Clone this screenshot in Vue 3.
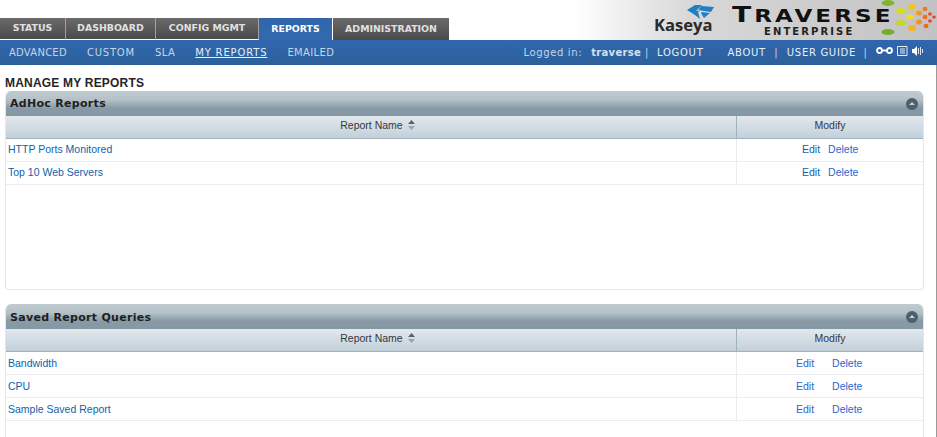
<script setup>
const tabs = [
  { label: 'STATUS', w: 66 },
  { label: 'DASHBOARD', w: 90 },
  { label: 'CONFIG MGMT', w: 103 },
  { label: 'REPORTS', w: 74, active: true },
  { label: 'ADMINISTRATION', w: 116 }
]
const subs = [
  { label: 'ADVANCED', ls: 0.25 },
  { label: 'CUSTOM', ls: 0.8 },
  { label: 'SLA', ls: 0.4 },
  { label: 'MY REPORTS', ls: 0.85, current: true },
  { label: 'EMAILED', ls: 0.35 }
]
const panels = [
  { title: 'AdHoc Reports', rows: ['HTTP Ports Monitored', 'Top 10 Web Servers'], wide: false, filler: 'tall' },
  { title: 'Saved Report Queries', rows: ['Bandwidth', 'CPU', 'Sample Saved Report'], wide: true, filler: 'open' }
]
const dots = [
  [35,3,6.5,3,'#7fb52e'],[35,32,6.5,3,'#76ad2c'],[48,11,5,3,'#d4dc20'],[48,23,5,3,'#c4d824'],
  [59,7,4,3,'#f4c420'],[57,17,4,2.5,'#f0dc20'],[59,28,4,3,'#f4b420'],
  [66,13,3,2.5,'#f49a20'],[66,22,3,2.5,'#f49020'],
  [72,9,2.5,2.2,'#f07828'],[72,17,2.5,2.2,'#f07020'],[73,26,2.5,2.2,'#f06820'],
  [77,14,2,1.8,'#ec5028'],[77,21,2,1.8,'#ec5024'],[81,17,1.7,1.6,'#e83428']
]
</script>

<template>
  <div class="page">
    <header class="top">
      <nav class="tabs">
        <a v-for="t in tabs" :key="t.label" class="tab" :class="{ active: t.active }" :style="{ width: t.w + 'px' }">{{ t.label }}</a>
      </nav>
      <div class="brand">
        <div class="kaseya">
          <svg class="bird" width="27" height="14" viewBox="0 0 27 14">
            <path d="M8 0H15L9 6 13 5.500 11 7 13 14 8 10 0 5Z" fill="#1f7fc4"/>
            <path d="M14 1 27 2 24 7 14 5.500 11.500 5Z" fill="#1f7fc4"/>
            <path d="M15 7 23 8 17 13 14 8Z" fill="#1f7fc4"/>
          </svg>
          <span class="kname">Kaseya</span>
        </div>
        <div class="traverse">
          <div class="tname"><span class="big">T</span>RAVERSE</div>
          <div class="ent">ENTERPRISE</div>
        </div>
        <svg class="dots" width="84" height="40" viewBox="0 0 84 40">
          <ellipse v-for="(d, i) in dots" :key="i" :cx="d[0]" :cy="d[1]" :rx="d[2]" :ry="d[3]" :fill="d[4]"/>
        </svg>
      </div>
    </header>

    <div class="bar">
      <div class="subs">
        <a v-for="s in subs" :key="s.label" class="sub" :class="{ current: s.current }" :style="{ letterSpacing: s.ls + 'px' }">{{ s.label }}</a>
      </div>
      <div class="util">
        <span class="login">Logged in:</span>
        <b class="user">traverse</b>
        <span class="pipe first">|</span>
        <a class="ulink logout">LOGOUT</a>
        <a class="ulink about">ABOUT</a>
        <span class="pipe">|</span>
        <a class="ulink">USER GUIDE</a>
        <span class="pipe end">|</span>
        <svg class="ico" width="17" height="7" viewBox="0 0 17 7">
          <circle cx="3.500" cy="3.500" r="2.500" fill="none" stroke="#fff" stroke-width="1.800"/>
          <circle cx="13.500" cy="3.500" r="2.500" fill="none" stroke="#fff" stroke-width="1.800"/>
          <path d="M6 3.500H11" stroke="#fff" stroke-width="1.800"/>
        </svg>
        <svg class="ico" width="11" height="10" viewBox="0 0 11 10">
          <path d="M.5.500H10V9.500H.5ZM3 3H8M3 5H8M3 7H8" fill="none" stroke="#e8eef6" stroke-width="1"/>
        </svg>
        <svg class="ico last" width="12" height="10" viewBox="0 0 12 10">
          <path d="M0 3H2L5 0V10L2 7H0Z" fill="#fff"/>
          <path d="M6.500 2V8M8.500 1V9M10.500 3V7" stroke="#dbe5f1" stroke-width="1"/>
        </svg>
      </div>
    </div>

    <main class="content">
      <h1 class="title">MANAGE MY REPORTS</h1>
      <section v-for="p in panels" :key="p.title" class="panel" :class="p.filler">
        <div class="phead">
          <h2>{{ p.title }}</h2>
          <span class="collapse"><i></i></span>
        </div>
        <div class="row thead">
          <div class="c1"><span class="hname">Report Name</span>
            <svg class="sort" width="9" height="10" viewBox="0 0 9 10">
              <path d="M4.500 0 8 4H1Z" fill="#56636e"/>
              <path d="M1 6H8L4.500 10Z" fill="#98a4ae"/>
            </svg>
          </div>
          <div class="c2">Modify</div>
        </div>
        <div v-for="r in p.rows" :key="r" class="row body">
          <div class="c1 name"><a>{{ r }}</a></div>
          <div class="c2 acts" :class="{ wide: p.wide }"><a class="edit">Edit</a><a>Delete</a></div>
        </div>
      </section>
    </main>
  </div>
</template>

<style>
html, body { margin: 0; background: #fff; overflow: hidden; }
</style>

<style scoped>
.page { width: 937px; height: 437px; overflow: hidden; font-family: "Liberation Sans", Arial, sans-serif; color: #222; }
.top {
  height: 40px; display: flex; justify-content: space-between; align-items: flex-end;
  background: linear-gradient(90deg, #fff 575px, #d8d8d8 690px, #c2c2c2 100%);
}
.tabs { display: flex; height: 22px; }
.tab {
  box-sizing: border-box; height: 22px; padding-bottom: 1px;
  display: flex; align-items: center; justify-content: center;
  font: bold 9.400px/1 "DejaVu Sans", Verdana, sans-serif; color: #e0e0e0;
  background: linear-gradient(#6a6a6a, #4a4a4a); border-right: 1px solid #a0a0a0;
  border-bottom: 1px solid #fff;
}
.tab:last-child { border-right: 0; border-bottom: 0; }
.tab.active { color: #fff; background: linear-gradient(#2f66ad, #3469ac); border-bottom: 0; border-right: 1px solid #fff; }
.brand { position: relative; width: 284px; height: 40px; display: flex; }
.kaseya { margin-left: 1px; width: 60px; display: flex; flex-direction: column; padding-top: 5px; box-sizing: border-box; height: 40px; }
.bird { align-self: flex-end; }
.kname { font: bold 16.600px/16px "Open Sans", "Liberation Sans", sans-serif; color: #2a2a2a; margin-top: -2px; }
.traverse { margin-left: 18px; width: 170px; }
.tname { font: bold 18px/20px "DejaVu Sans", sans-serif; color: #111; letter-spacing: 2.400px; margin-top: 5px; white-space: nowrap; transform: scaleX(1.280); transform-origin: left center; }
.big { font-size: 22px; }
.ent { font: bold 10px/9px "DejaVu Sans", sans-serif; letter-spacing: 2.100px; color: #222; margin-top: 1px; margin-left: 32px; white-space: nowrap; }
.dots { position: absolute; right: 0; top: 0; width: 84px; }
.bar {
  height: 25px; display: flex; justify-content: space-between; align-items: center;
  background: linear-gradient(#2f66b0, #2c6199); color: #dce6f2;
  font: 10px/1 "DejaVu Sans", Verdana, sans-serif;
}
.subs { display: flex; padding-left: 9px; gap: 20px; color: #c6d5e6; }
.sub.current { color: #e8eef6; text-decoration: underline; }
.util { display: flex; align-items: center; padding-right: 13px; letter-spacing: 0.65px; white-space: nowrap; }
.login { color: #c6d5e6; }
.user { margin-left: 9px; color: #d7e1ec; letter-spacing: 0.3px; }
.pipe { margin: 0 8.500px; color: #c6d5e6; }
.pipe.first { margin: 0 8px 0 4px; }
.pipe.end { margin: 0 8.500px 0 7.500px; }
.ulink { color: #e8eef6; letter-spacing: 0.7px; }
.logout { margin-right: 24px; }
.ico { margin: 0 4px 4px 0; }
.ico.last { margin-right: 0; }
.content { box-sizing: border-box; height: 372px; padding: 11px 0 0 5px; border-right: 1px solid #9a9a9a; }
.title { margin: 0; font: bold 12px/15px "Liberation Sans", sans-serif; color: #252525; letter-spacing: 0.200px; }
.panel {
  box-sizing: border-box; width: 919px; border: 1px solid #e6e6e6; border-top: 0; border-radius: 6px 6px 4px 4px; overflow: hidden;
}
.panel.tall { height: 199px; margin-bottom: 14px; }
.panel.open { height: 160px; border-bottom: 0; }
.phead {
  height: 25px; display: flex; justify-content: space-between; align-items: center; padding: 0 5px 0 4px;
  background: linear-gradient(#bfcbd0 0, #b4c1c7 35%, #8799a4 70%, #8599a4 100%);
}
.phead h2 { margin: 0; font: bold 11px/1 "DejaVu Sans", Verdana, sans-serif; color: #1f1f1f; letter-spacing: 0.300px; }
.open .phead h2 { padding-top: 2px; }
.collapse { width: 12px; height: 12px; border-radius: 50%; background: #4c5f6c; display: flex; align-items: center; justify-content: center; }
.collapse i { width: 0; height: 0; border: 3px solid transparent; border-top: 0; border-bottom: 3px solid #c7d0d6; }
.row { display: grid; grid-template-columns: 731px 1fr; height: 23px; box-sizing: border-box; }
.thead { background: linear-gradient(#e2e8ee, #c3d0d9); border-bottom: 1px solid #9db1bf; color: #33393f; font-size: 10.500px; }
.thead > div { display: flex; align-items: center; justify-content: center; padding-bottom: 4px; box-sizing: border-box; }
.thead .c1 { border-right: 1px solid #9fb2bf; padding-left: 14px; }
.sort { margin-left: 4px; }
.body { border-bottom: 1px solid #ececec; font-size: 10.500px; }
.body > div { display: flex; align-items: center; padding-bottom: 2px; }
.open .body > div { padding-bottom: 0; }
.name { padding-left: 2px; border-right: 1px solid #ececec; }
.name a { color: #0f62ab; }
.acts { padding-left: 65px; }
.acts a { color: #2a66cc; }
.acts .edit { color: #0f62ab; margin-right: 8px; }
.acts.wide { padding-left: 59px; }
.acts.wide .edit { color: #2a66cc; margin-right: 18px; }
</style>
